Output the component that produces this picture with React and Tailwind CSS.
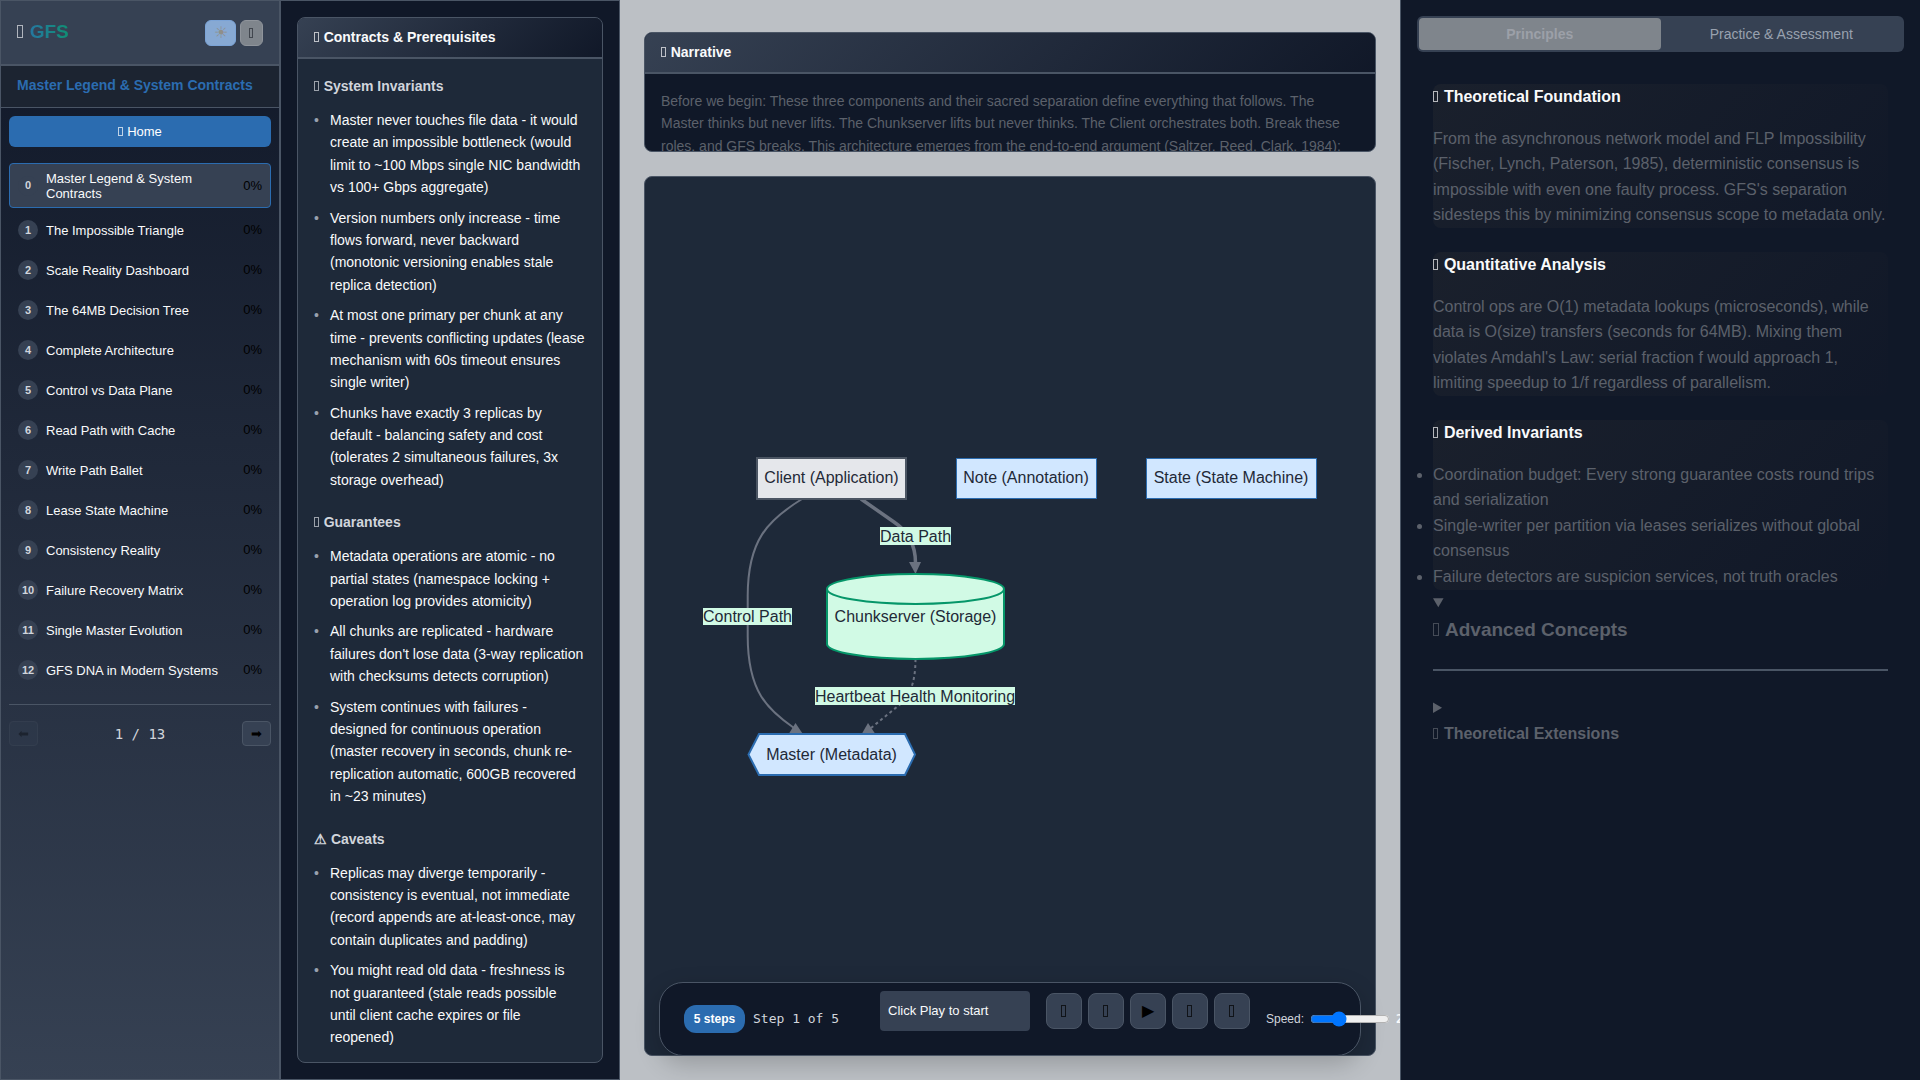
import React from "react";

const chapters = [
  "Master Legend & System Contracts",
  "The Impossible Triangle",
  "Scale Reality Dashboard",
  "The 64MB Decision Tree",
  "Complete Architecture",
  "Control vs Data Plane",
  "Read Path with Cache",
  "Write Path Ballet",
  "Lease State Machine",
  "Consistency Reality",
  "Failure Recovery Matrix",
  "Single Master Evolution",
  "GFS DNA in Modern Systems",
];

const contracts = [
  {
    title: "System Invariants",
    items: [
      "Master never touches file data - it would create an impossible bottleneck (would limit to ~100 Mbps single NIC bandwidth vs 100+ Gbps aggregate)",
      "Version numbers only increase - time flows forward, never backward (monotonic versioning enables stale replica detection)",
      "At most one primary per chunk at any time - prevents conflicting updates (lease mechanism with 60s timeout ensures single writer)",
      "Chunks have exactly 3 replicas by default - balancing safety and cost (tolerates 2 simultaneous failures, 3x storage overhead)",
    ],
  },
  {
    title: "Guarantees",
    items: [
      "Metadata operations are atomic - no partial states (namespace locking + operation log provides atomicity)",
      "All chunks are replicated - hardware failures don't lose data (3-way replication with checksums detects corruption)",
      "System continues with failures - designed for continuous operation (master recovery in seconds, chunk re-replication automatic, 600GB recovered in ~23 minutes)",
    ],
  },
  {
    title: "Caveats",
    icon: "⚠",
    items: [
      "Replicas may diverge temporarily - consistency is eventual, not immediate (record appends are at-least-once, may contain duplicates and padding)",
      "You might read old data - freshness is not guaranteed (stale reads possible until client cache expires or file reopened)",
    ],
  },
];

/* Narrow outlined box used as the generic icon; scales with the text around it. */
function Glyph() {
  return <span aria-hidden="true" className="mr-px inline-block h-[0.7em] w-[0.34em] border border-current opacity-70" />;
}

function Sidebar() {
  return (
    <aside className="flex flex-col border border-gray-600 bg-linear-to-b from-gray-900 to-gray-700">
      <header className="flex h-[65px] shrink-0 items-center justify-between border-b-2 border-gray-600 bg-gray-700 px-4">
        <h1 className="text-[19px] font-bold text-gray-200">
          <Glyph />{" "}
          <span className="bg-linear-to-r from-[#2577a0] to-[#0f8f72] bg-clip-text text-transparent">GFS</span>
        </h1>
        <div className="flex items-center gap-1">
          <button aria-label="Light theme" className="h-[26px] w-[31px] rounded-md border border-[#7ba3d6] bg-[#87a9d3] text-[16px] leading-none text-[#8f8f8a]">☀</button>
          <button aria-label="Dark theme" className="h-[26px] w-[23px] rounded-md border border-[#8f949b] bg-[#7f858c] text-[14px] leading-none text-[#262b33]"><Glyph /></button>
        </div>
      </header>
      <h2 className="h-[42px] shrink-0 border-b border-gray-600 bg-[#1c2431] px-4 pt-[9px] text-[14px] leading-5 font-bold whitespace-nowrap text-[#2b6cb0]">
        Master Legend &amp; System Contracts
      </h2>
      <nav className="flex flex-col px-2 pt-2" aria-label="Chapters">
        <button className="mb-4 h-[31px] rounded-md bg-[#2b6cb0] text-[13px] text-white"><Glyph /> Home</button>
        <ul className="flex flex-col gap-1 border-b border-gray-600 pb-4">
          {chapters.map((name, i) => (
            <li key={name}>
              <button
                className={
                  i === 0
                    ? "flex h-[45px] w-full items-center gap-2 rounded border border-[#2b6cb0] bg-gray-700 px-2 text-left"
                    : "flex h-9 w-full items-center gap-2 rounded border border-transparent px-2 text-left"
                }
              >
                <span className="flex size-5 shrink-0 items-center justify-center rounded-full bg-gray-700 text-[11px] font-bold text-gray-300">{i}</span>
                <span className="min-w-0 flex-1 text-[13px] leading-[15px] text-gray-50">{name}</span>
                <span className="text-[13px] text-black">0%</span>
              </button>
            </li>
          ))}
        </ul>
        <div className="mt-4 flex items-center justify-between">
          <button disabled aria-label="Previous chapter" className="h-[25px] w-[29px] rounded border border-gray-600 bg-gray-700 text-[13px] leading-none text-black opacity-30">⬅</button>
          <span className="font-['DejaVu_Sans_Mono',monospace] text-sm text-gray-300">1 / 13</span>
          <button aria-label="Next chapter" className="h-[25px] w-[29px] rounded border border-gray-600 bg-gray-700 text-[13px] leading-none text-black">➡</button>
        </div>
      </nav>
    </aside>
  );
}

function CardHeader({ children }) {
  return (
    <h2 className="h-[41px] shrink-0 border-b-2 border-gray-600 bg-linear-[135deg] from-gray-700 to-gray-900 px-4 text-[14px] leading-[39px] font-bold text-gray-50">
      <Glyph /> {children}
    </h2>
  );
}

function Contracts() {
  return (
    <section className="flex min-h-0 flex-col border border-gray-600 bg-gray-900 p-4">
      <div className="flex min-h-0 flex-1 flex-col overflow-hidden rounded-lg border border-gray-600 bg-gray-800">
        <CardHeader>Contracts &amp; Prerequisites</CardHeader>
        <div className="px-4 pt-4">
          {contracts.map((group) => (
            <div key={group.title} className="mb-5">
              <h3 className="mb-3 text-[14px] leading-[22px] font-bold text-gray-300">
                {group.icon ?? <Glyph />} {group.title}
              </h3>
              <ul className="flex flex-col gap-2">
                {group.items.map((item) => (
                  <li key={item} className="flex text-sm leading-[1.6] text-gray-50">
                    <span className="w-4 shrink-0 text-gray-400">•</span>
                    <span>{item}</span>
                  </li>
                ))}
              </ul>
            </div>
          ))}
        </div>
      </div>
    </section>
  );
}

function Diagram() {
  return (
    <svg
      viewBox="0 0 630 336"
      className="w-[630px] max-w-full text-[16px]"
      role="img"
      aria-label="Component legend"
      fill="#1f2937"
      textAnchor="middle"
    >
      <g fill="none" stroke="#6b7280">
        <path strokeWidth="2" d="M107 51C73 72 52.7 92 52.7 148V188C52.7 244 73 262 99 280" />
        <path strokeWidth="3.5" d="M166 51L199 74C214 84 220.5 98 220.5 115" />
        <path strokeWidth="2" strokeDasharray="3" d="M220.5 211C220.5 236 214 250 203 258L176 280" />
      </g>
      <g fill="#6b7280">
        <path d="M107.500 285.500L100.500 275L94 285.500Z" />
        <path d="M214 114H226L220.500 126Z" />
        <path d="M167 285.500L173 275L180 285.500Z" />
      </g>
      <rect x="62" y="10" width="149" height="41" fill="#e5e7eb" stroke="#4b5563" strokeWidth="2" />
      <g fill="#d1e7ff" stroke="#2b6cb0">
        <rect x="261.500" y="10.500" width="140" height="40" />
        <rect x="451.500" y="10.500" width="170" height="40" />
        <path strokeWidth="2" d="M64 286H210L220 306.500L210 327H64L53.500 306.500Z" />
      </g>
      <g fill="#d1fae5" stroke="#059669" strokeWidth="2">
        <path d="M132 141A88.500 15 0 0 1 309 141V196A88.500 15 0 0 1 132 196Z" />
        <path fill="none" d="M132 141A88.500 15 0 0 0 309 141" />
      </g>
      <g fill="#d1fae5">
        <rect x="185" y="79" width="71" height="18" />
        <rect x="8" y="160" width="89" height="17" />
        <rect x="120" y="239" width="200" height="18" />
      </g>
      <text x="136.500" y="35">Client (Application)</text>
      <text x="331" y="35">Note (Annotation)</text>
      <text x="536" y="35">State (State Machine)</text>
      <text x="220.500" y="94">Data Path</text>
      <text x="52.500" y="174">Control Path</text>
      <text x="220.500" y="174">Chunkserver (Storage)</text>
      <text x="220" y="254">Heartbeat Health Monitoring</text>
      <text x="136.500" y="312">Master (Metadata)</text>
    </svg>
  );
}

const controls = ["Restart", "Previous step", "Play", "Next step", "Fullscreen"];

function Player() {
  return (
    <div className="absolute inset-x-3.5 bottom-0 -mb-px flex h-[74px] items-center rounded-3xl border border-gray-600 bg-gray-900 pl-6 whitespace-nowrap shadow-[0_8px_24px_rgba(0,0,0,0.2)]">
      <span className="flex h-7 w-[61px] shrink-0 items-center justify-center rounded-xl bg-[#2b6cb0] text-xs font-bold text-white">5 steps</span>
      <span className="ml-2 w-[127px] shrink-0 font-['DejaVu_Sans_Mono',monospace] text-[13px] text-gray-300">Step 1 of 5</span>
      <div className="mb-4 flex h-10 w-[150px] shrink-0 items-center rounded bg-gray-700 px-2 text-[13px] text-gray-50">Click Play to start</div>
      <div className="mb-4 ml-4 flex shrink-0 gap-1.5">
        {controls.map((label) => (
          <button key={label} aria-label={label} className="flex size-9 items-center justify-center rounded-lg border border-gray-600 bg-gray-700 text-base text-black">
            {label === "Play" ? "▶" : <Glyph />}
          </button>
        ))}
      </div>
      <label className="ml-4 flex shrink-0 items-center gap-1.5 text-xs text-gray-300">
        Speed:
        <input type="range" min="0.5" max="5" step="0.5" defaultValue="2" className="w-20" />
        <span className="font-['DejaVu_Sans_Mono',monospace] font-bold text-gray-50">2.0s</span>
      </label>
    </div>
  );
}

function Main() {
  return (
    <main className="flex min-w-0 flex-col gap-6 overflow-hidden bg-[#bcc0c5] px-6 pt-8 pb-6">
      <section className="flex h-[120px] shrink-0 flex-col overflow-hidden rounded-lg border border-gray-600 bg-gray-900">
        <CardHeader>Narrative</CardHeader>
        <p className="px-4 pt-4 text-sm leading-[1.6] text-[#5c616b]">
          Before we begin: These three components and their sacred separation define everything that follows. The Master
          thinks but never lifts. The Chunkserver lifts but never thinks. The Client orchestrates both. Break these roles,
          and GFS breaks. This architecture emerges from the end-to-end argument (Saltzer, Reed, Clark, 1984):
        </p>
      </section>
      <section className="relative flex min-h-0 flex-1 items-center justify-center rounded-lg border border-gray-600 bg-gray-800">
        <Diagram />
        <Player />
      </section>
    </main>
  );
}

function Principle({ title, children }) {
  return (
    <section className="rounded-lg bg-linear-[135deg] from-[#1a202c] to-gray-900">
      <h3 className="mb-4 font-bold text-gray-50">
        <Glyph /> {title}
      </h3>
      {children}
    </section>
  );
}

function Theory() {
  return (
    <aside className="border-l border-gray-600 bg-gray-900 px-4 pt-4 text-base leading-[1.6] text-[#5c616b]">
      <div role="tablist" className="grid h-9 grid-cols-2 rounded-md bg-gray-700 p-0.5 text-sm">
        <button role="tab" aria-selected="true" className="rounded bg-[#7f858c] font-bold text-[#9ca0a8]">Principles</button>
        <button role="tab" aria-selected="false" className="rounded text-gray-400">Practice &amp; Assessment</button>
      </div>
      <div className="flex flex-col gap-6 px-4 pt-8">
        <Principle title="Theoretical Foundation">
          <p>
            From the asynchronous network model and FLP Impossibility (Fischer, Lynch, Paterson, 1985), deterministic
            consensus is impossible with even one faulty process. GFS's separation sidesteps this by minimizing consensus
            scope to metadata only.
          </p>
        </Principle>
        <Principle title="Quantitative Analysis">
          <p>
            Control ops are O(1) metadata lookups (microseconds), while data is O(size) transfers (seconds for 64MB).
            Mixing them violates Amdahl's Law: serial fraction f would approach 1, limiting speedup to 1/f regardless of
            parallelism.
          </p>
        </Principle>
        <Principle title="Derived Invariants">
          <ul className="list-disc">
            <li>Coordination budget: Every strong guarantee costs round trips and serialization</li>
            <li>Single-writer per partition via leases serializes without global consensus</li>
            <li>Failure detectors are suspicion services, not truth oracles</li>
          </ul>
        </Principle>
      </div>
      <details open className="px-4">
        <summary>
          <h2 className="border-b-2 border-gray-600 pb-6 text-[19px] font-bold"><Glyph /> Advanced Concepts</h2>
        </summary>
        <details className="pt-6">
          <summary>
            <h3 className="font-bold"><Glyph /> Theoretical Extensions</h3>
          </summary>
        </details>
      </details>
    </aside>
  );
}

export default function App() {
  return (
    <div className="grid h-screen grid-cols-[280px_340px_minmax(0,1fr)_520px] grid-rows-[minmax(0,1fr)] overflow-hidden font-['Liberation_Sans',Arial,sans-serif]">
      <Sidebar />
      <Contracts />
      <Main />
      <Theory />
    </div>
  );
}
